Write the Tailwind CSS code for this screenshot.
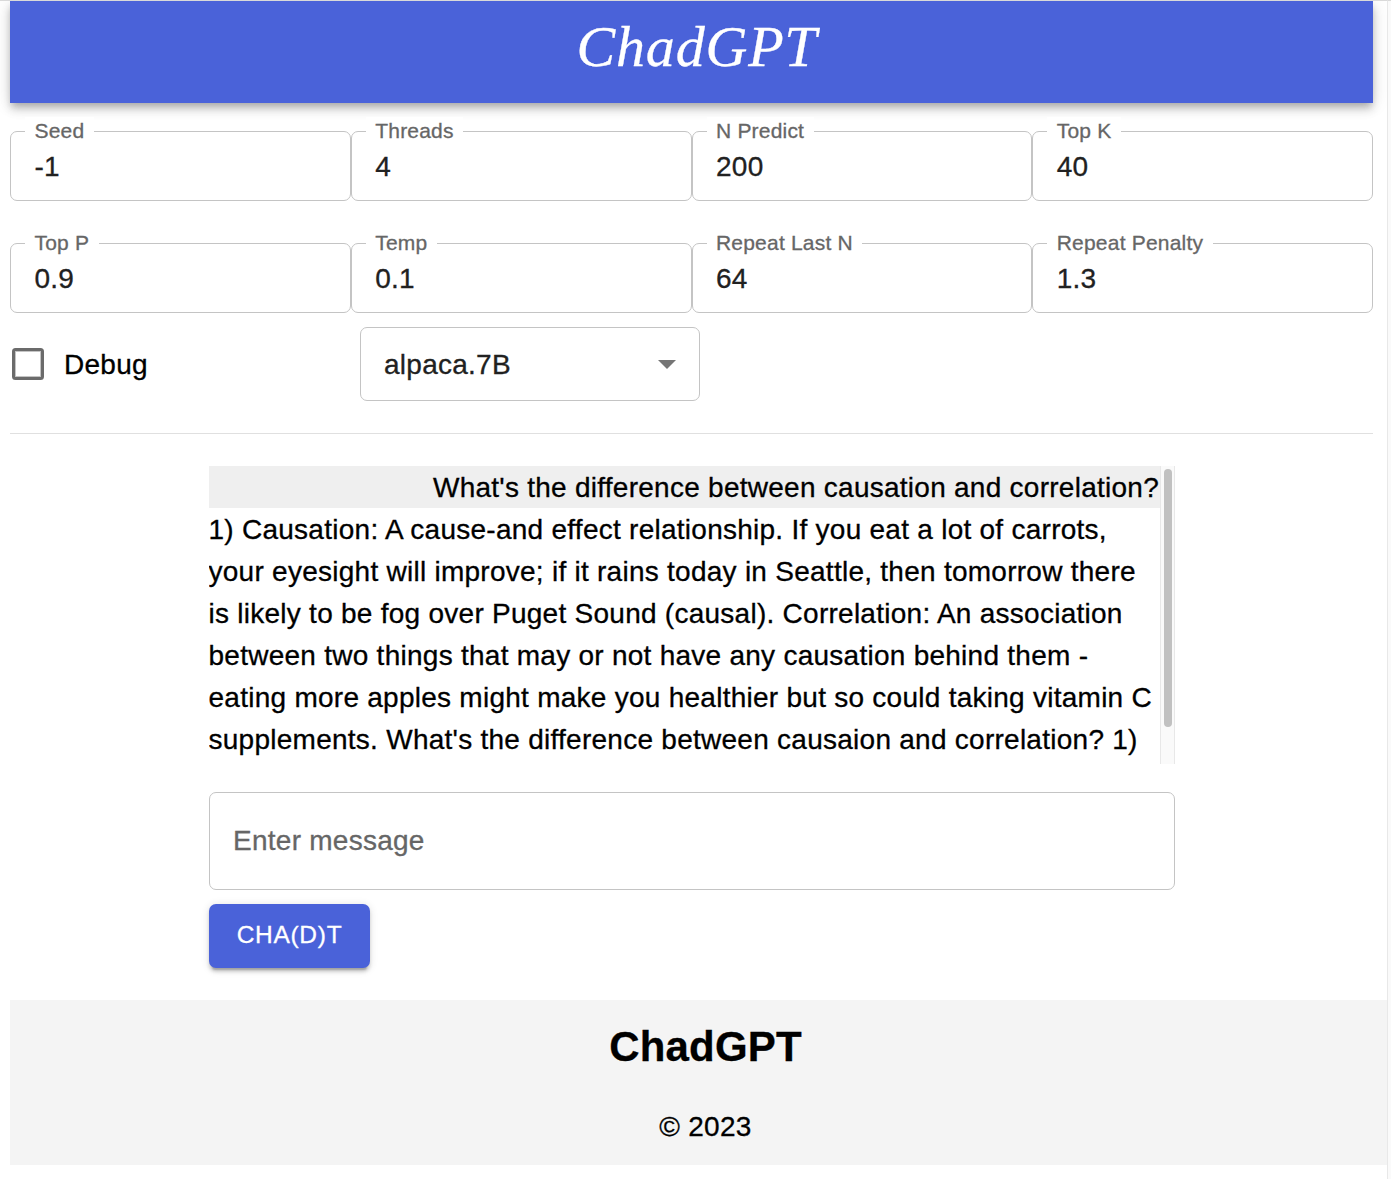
<!DOCTYPE html>
<html lang="en">
<head>
<meta charset="utf-8">
<title>ChadGPT</title>
<script src="https://cdn.jsdelivr.net/npm/@tailwindcss/browser@4"></script>
</head>
<body class="flex h-[1179px] overflow-hidden bg-white font-['Liberation_Sans',Arial,sans-serif] text-[28px] text-black [-webkit-text-stroke:0.3px_currentColor]">
<div class="flex w-[1387px] shrink-0 flex-col overflow-hidden border-t border-[#d9d9d9] pl-[10px]">
  <header class="flex h-[102px] w-[1363px] shrink-0 justify-center bg-[#4a62d9] shadow-[0_3.5px_7px_-1.75px_rgba(0,0,0,0.2),0_7px_8.75px_rgba(0,0,0,0.14),0_1.75px_17.5px_rgba(0,0,0,0.12)]">
    <h1 class="h-[80px] pl-[11px] font-['Apple_Chancery','Liberation_Serif',serif] text-[58px] leading-[92px] tracking-[0.8px] text-white italic">ChadGPT</h1>
  </header>

  <main class="flex w-[1363px] shrink-0 flex-col">
    <section class="mt-[28px] grid grid-cols-4 gap-y-[42px]">
      <div class="h-[70px] rounded-[7px] border border-[#c4c4c4]"><div class="-mt-[15px] ml-[14px] w-fit bg-white px-[9.5px] text-[21px] leading-[28px] tracking-[0.2px] text-[#666]">Seed</div><div class="-mt-[1px] pl-[23.5px] leading-[46px] tracking-[0.26px] text-[#212121]">-1</div></div>
      <div class="h-[70px] rounded-[7px] border border-[#c4c4c4]"><div class="-mt-[15px] ml-[14px] w-fit bg-white px-[9.5px] text-[21px] leading-[28px] tracking-[0.2px] text-[#666]">Threads</div><div class="-mt-[1px] pl-[23.5px] leading-[46px] tracking-[0.26px] text-[#212121]">4</div></div>
      <div class="h-[70px] rounded-[7px] border border-[#c4c4c4]"><div class="-mt-[15px] ml-[14px] w-fit bg-white px-[9.5px] text-[21px] leading-[28px] tracking-[0.2px] text-[#666]">N Predict</div><div class="-mt-[1px] pl-[23.5px] leading-[46px] tracking-[0.26px] text-[#212121]">200</div></div>
      <div class="h-[70px] rounded-[7px] border border-[#c4c4c4]"><div class="-mt-[15px] ml-[14px] w-fit bg-white px-[9.5px] text-[21px] leading-[28px] tracking-[0.2px] text-[#666]">Top K</div><div class="-mt-[1px] pl-[23.5px] leading-[46px] tracking-[0.26px] text-[#212121]">40</div></div>
      <div class="h-[70px] rounded-[7px] border border-[#c4c4c4]"><div class="-mt-[15px] ml-[14px] w-fit bg-white px-[9.5px] text-[21px] leading-[28px] tracking-[0.2px] text-[#666]">Top P</div><div class="-mt-[1px] pl-[23.5px] leading-[46px] tracking-[0.26px] text-[#212121]">0.9</div></div>
      <div class="h-[70px] rounded-[7px] border border-[#c4c4c4]"><div class="-mt-[15px] ml-[14px] w-fit bg-white px-[9.5px] text-[21px] leading-[28px] tracking-[0.2px] text-[#666]">Temp</div><div class="-mt-[1px] pl-[23.5px] leading-[46px] tracking-[0.26px] text-[#212121]">0.1</div></div>
      <div class="h-[70px] rounded-[7px] border border-[#c4c4c4]"><div class="-mt-[15px] ml-[14px] w-fit bg-white px-[9.5px] text-[21px] leading-[28px] tracking-[0.2px] text-[#666]">Repeat Last N</div><div class="-mt-[1px] pl-[23.5px] leading-[46px] tracking-[0.26px] text-[#212121]">64</div></div>
      <div class="h-[70px] rounded-[7px] border border-[#c4c4c4]"><div class="-mt-[15px] ml-[14px] w-fit bg-white px-[9.5px] text-[21px] leading-[28px] tracking-[0.2px] text-[#666]">Repeat Penalty</div><div class="-mt-[1px] pl-[23.5px] leading-[46px] tracking-[0.26px] text-[#212121]">1.3</div></div>
    </section>

    <section class="mt-[14px] flex h-[74px] items-center">
      <label class="flex w-[350px] items-center gap-5 pl-[2px] tracking-[0.26px]">
        <span class="size-8 rounded-[3.5px] border-3 border-[#6b6b6b] ring-1 ring-[#6b6b6b]/40 ring-inset"></span><span class="pt-[2px]">Debug</span>
      </label>
      <div class="flex h-[74px] w-[340px] items-center justify-between rounded-[7px] border border-[#c4c4c4] pr-[23.5px] pl-[23px] tracking-[0.26px] text-[#212121]">
        <span class="pt-[2px]">alpaca.7B</span>
        <svg class="mt-[1px] h-[9px] w-[18px]" viewBox="0 0 18 9"><path d="M0 0h18L9 9z" fill="#757575"/></svg>
      </div>
    </section>
    <div class="mt-8 h-px bg-[#e0e0e0]"></div>

    <section class="mt-8 ml-[199px] w-[966px]">
      <div class="flex h-[298px] overflow-hidden">
        <div class="w-[951px] leading-[42px] tracking-[0.26px] whitespace-nowrap">
          <p class="h-[42px] bg-[#efefef] pt-[1px] pr-[1px] text-right">What's the difference between causation and correlation?</p>
          <p class="-ml-[0.5px] pt-[1px]">1) Causation: A cause-and effect relationship. If you eat a lot of carrots,<br>your eyesight will improve; if it rains today in Seattle, then tomorrow there<br>is likely to be fog over Puget Sound (causal). Correlation: An association<br>between two things that may or not have any causation behind them -<br>eating more apples might make you healthier but so could taking vitamin C<br>supplements. What's the difference between causaion and correlation? 1)</p>
        </div>
        <div class="w-[15px] border-x border-[#e8e8e8] bg-[#fafafa] pt-[3px] pl-[3px]"><div class="h-[258px] w-2 rounded-full bg-[#c1c1c1]"></div></div>
      </div>
      <div class="mt-[28px] flex h-[98px] items-center rounded-[7px] border border-[#c4c4c4] pl-[23px] tracking-[0.26px] text-[#666]">Enter message</div>
      <button class="mt-[14px] block h-[64px] w-[161px] rounded-[7px] bg-[#4a62d9] pb-[1px] text-[24.5px] tracking-[0.7px] text-white shadow-[0_5.25px_1.75px_-3.5px_rgba(0,0,0,0.2),0_3.5px_3.5px_rgba(0,0,0,0.14),0_1.75px_8.75px_rgba(0,0,0,0.12)]">CHA(D)T</button>
    </section>
  </main>

  <footer class="mt-8 flex h-[165px] w-[1377px] shrink-0 flex-col items-center bg-[#f4f4f4] pl-[14px]">
    <h2 class="mt-[19px] text-[42px] leading-[56px] font-bold tracking-[0.2px]">ChadGPT</h2>
    <p class="mt-[31px] leading-[42px] tracking-[0.26px]">© 2023</p>
  </footer>
</div>
<div class="flex-1 border-t border-l border-t-[#d9d9d9] border-l-[#e8e8e8] bg-[#fafafa]"></div>
</body>
</html>
